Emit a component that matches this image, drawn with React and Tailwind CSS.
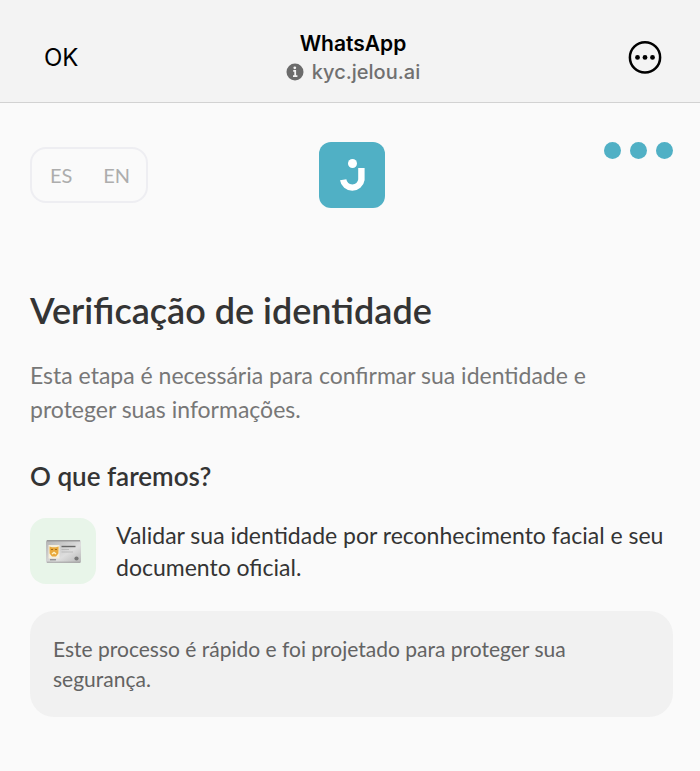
import { useState } from 'react';

function MoreIcon() {
  return (
    <svg width="34" height="34" viewBox="0 0 34 34" aria-hidden="true">
      <circle cx="17" cy="16.4" r="15.1" fill="none" stroke="#000" strokeWidth="2.5" />
      <circle cx="9.5" cy="16.4" r="2.4" />
      <circle cx="17" cy="16.4" r="2.4" />
      <circle cx="24.5" cy="16.4" r="2.4" />
    </svg>
  );
}

function InfoIcon() {
  return (
    <svg width="18" height="18" viewBox="0 0 18 18" aria-hidden="true">
      <circle cx="9" cy="9" r="8.5" fill="#6b6b6b" />
      <circle cx="8.8" cy="4.8" r="1.4" fill="#f3f3f3" />
      <path
        d="M7.2 7.8H9.2V13M7 13.1H11.4"
        fill="none"
        stroke="#f3f3f3"
        strokeWidth="1.8"
      />
    </svg>
  );
}

function Logo() {
  return (
    <svg width="66" height="66" viewBox="0 0 66 66" role="img" aria-label="Jelou">
      <rect width="66" height="66" rx="12" fill="#50b0c5" />
      <circle cx="33.5" cy="21.5" r="4.5" fill="#fff" />
      <path
        d="M42.4 26V37.8A9.2 9.2 0 0 1 24.2 37.8"
        fill="none"
        stroke="#fff"
        strokeWidth="6.4"
      />
    </svg>
  );
}

function IdCard() {
  return (
    <svg width="35" height="23" viewBox="0 0 35 23" aria-hidden="true">
      <defs>
        <linearGradient id="card" x1="0" y1="0" x2="1" y2="1">
          <stop offset="0" stopColor="#b3b3b3" />
          <stop offset="0.6" stopColor="#dedede" />
          <stop offset="1" stopColor="#b5b5b5" />
        </linearGradient>
      </defs>
      <rect width="35" height="23" rx="1.5" fill="url(#card)" />
      <path d="M1 0.8H34" stroke="#999" strokeWidth="1.6" />
      <path d="M1 22.2H34" stroke="#a3a3a3" strokeWidth="1" />
      <rect x="2.5" y="5" width="11" height="13.5" fill="#f5efdc" />
      <path
        d="M3.5 6.5L6 7.3H10L12.6 6.5L12.4 13.5L10 16.5H6L3.6 13.5Z"
        fill="#e9a93a"
      />
      <path d="M5 9.5H7M9 9.5H11" stroke="#a06a1c" strokeWidth="1.2" />
      <path d="M6 14L8 12.5L10 14" fill="none" stroke="#fff3c4" strokeWidth="1.5" />
      <path d="M4 19.8H10" stroke="#777" strokeWidth="1" />
      <path d="M15.5 6.5H29.5" stroke="#666" strokeWidth="1.4" />
      <path d="M15.5 9.5H23M15.5 12H27" stroke="#b4b4b4" strokeWidth="0.8" />
      <circle cx="30.5" cy="18.5" r="2.1" fill="#777" />
    </svg>
  );
}

export default function App() {

  const [lang, setLang] = useState('PT');

  return (

    <div className="min-h-screen bg-[#fafafa] font-['Lato','Noto_Sans',sans-serif] text-[#343434]">

      {/* BROWSER BAR */}

      <header className="grid grid-cols-[1fr_auto_1fr] items-center border-b border-[#d2d2d2] bg-[#f3f3f3] pt-[30px] pr-[38px] pb-4 pl-11 font-['Inter','Liberation_Sans',sans-serif]">

        <button type="button" className="justify-self-start text-2xl text-black">
          OK
        </button>

        <div className="flex flex-col items-center">

          <div className="text-[21px] leading-7 font-semibold text-black">
            WhatsApp
          </div>

          <div className="flex items-center gap-2 text-xl leading-7 font-medium text-[#707070]">
            <InfoIcon />
            kyc.jelou.ai
          </div>

        </div>

        <button type="button" aria-label="Mais opções" className="justify-self-end">
          <MoreIcon />
        </button>

      </header>

      <main className="pt-[39px] pr-[27px] pb-[54px] pl-[30px]">

        {/* LANGUAGE, LOGO, STEPS */}

        <div className="grid grid-cols-[1fr_auto_1fr] items-center">

          <div className="flex h-14 w-[118px] items-center justify-between justify-self-start rounded-2xl border-2 border-[#eeeef2] pr-4 pl-[18px] text-xl text-[#adadad]">
            <button type="button" aria-pressed={lang === 'ES'} onClick={() => setLang('ES')}>
              ES
            </button>
            <button type="button" aria-pressed={lang === 'EN'} onClick={() => setLang('EN')}>
              EN
            </button>
          </div>

          <Logo />

          <div className="flex gap-[9px] self-start justify-self-end">
            <span className="size-[17px] rounded-full bg-[#50b0c5]" />
            <span className="size-[17px] rounded-full bg-[#50b0c5]" />
            <span className="size-[17px] rounded-full bg-[#50b0c5]" />
          </div>

        </div>

        {/* INTRO */}

        <h1 className="mt-[78px] text-4xl leading-12 font-semibold">
          Verificação de identidade
        </h1>

        <p className="mt-6 text-[23px] leading-[34px] text-[#777777]">
          Esta etapa é necessária para confirmar sua identidade e proteger suas informações.
        </p>

        {/* WHAT WE WILL DO */}

        <h2 className="mt-8 text-[26px] leading-9 font-semibold">
          O que faremos?
        </h2>

        <div className="mt-6 flex items-center gap-5">

          <div className="flex size-[66px] shrink-0 items-center justify-center rounded-2xl bg-[#e8f5e9]">
            <IdCard />
          </div>

          <p className="text-[23px] leading-8">
            Validar sua identidade por reconhecimento facial e seu documento oficial.
          </p>

        </div>

        <div className="mt-[27px] rounded-3xl bg-[#f1f1f1] p-[23px]">
          <p className="text-[21px] leading-[30px] text-[#636363]">
            Este processo é rápido e foi projetado para proteger sua segurança.
          </p>
        </div>

      </main>

    </div>

  );

}
